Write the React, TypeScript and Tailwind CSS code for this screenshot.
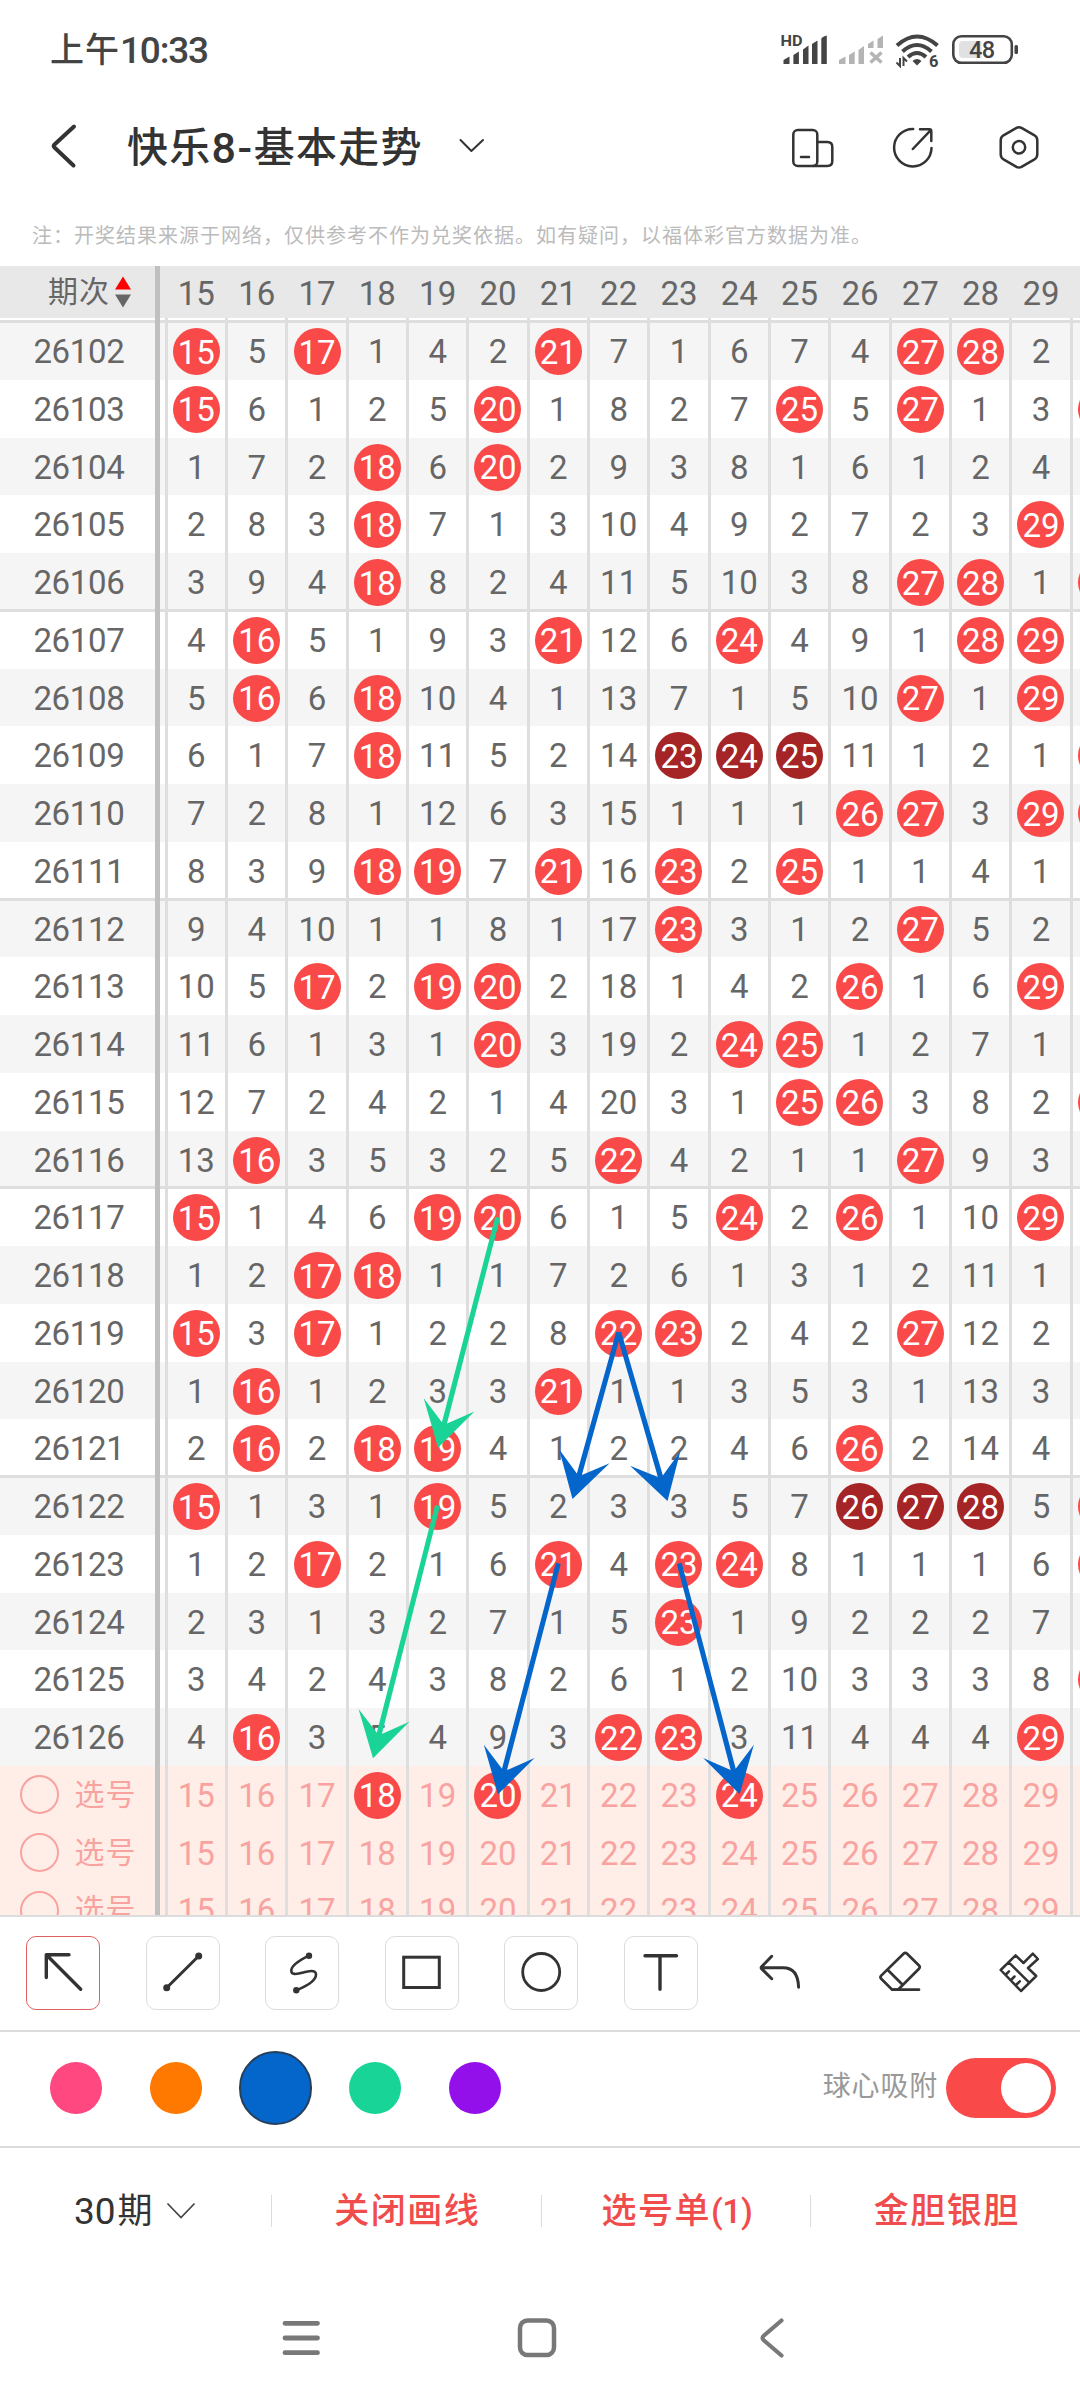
import type { ReactNode } from 'react';

const COLUMNS = [15, 16, 17, 18, 19, 20, 21, 22, 23, 24, 25, 26, 27, 28, 29, 30];

// "*" is a drawn number, "#" a drawn number inside a consecutive run, digits are misses.
const DRAWS = [
  '* 5 * 1 4 2 * 7 1 6 7 4 * * 2 -',
  '* 6 1 2 5 * 1 8 2 7 * 5 * 1 3 *',
  '1 7 2 * 6 * 2 9 3 8 1 6 1 2 4 -',
  '2 8 3 * 7 1 3 10 4 9 2 7 2 3 * -',
  '3 9 4 * 8 2 4 11 5 10 3 8 * * 1 *',
  '4 * 5 1 9 3 * 12 6 * 4 9 1 * * -',
  '5 * 6 * 10 4 1 13 7 1 5 10 * 1 * -',
  '6 1 7 * 11 5 2 14 # # # 11 1 2 1 *',
  '7 2 8 1 12 6 3 15 1 1 1 * * 3 * *',
  '8 3 9 * * 7 * 16 * 2 * 1 1 4 1 -',
  '9 4 10 1 1 8 1 17 * 3 1 2 * 5 2 -',
  '10 5 * 2 * * 2 18 1 4 2 * 1 6 * -',
  '11 6 1 3 1 * 3 19 2 * * 1 2 7 1 -',
  '12 7 2 4 2 1 4 20 3 1 * * 3 8 2 *',
  '13 * 3 5 3 2 5 * 4 2 1 1 * 9 3 -',
  '* 1 4 6 * * 6 1 5 * 2 * 1 10 * -',
  '1 2 * * 1 1 7 2 6 1 3 1 2 11 1 -',
  '* 3 * 1 2 2 8 * * 2 4 2 * 12 2 -',
  '1 * 1 2 3 3 * 1 1 3 5 3 1 13 3 -',
  '2 * 2 * * 4 1 2 2 4 6 * 2 14 4 -',
  '* 1 3 1 * 5 2 3 3 5 7 # # # 5 *',
  '1 2 * 2 1 6 * 4 * * 8 1 1 1 6 *',
  '2 3 1 3 2 7 1 5 * 1 9 2 2 2 7 -',
  '3 4 2 4 3 8 2 6 1 2 10 3 3 3 8 *',
  '4 * 3 5 4 9 3 * * 3 11 4 4 4 * -',
].map((line) => line.split(' '));

const PICKS = [[18, 20, 24], [], []];

// Arrow geometry is relative to the top-left corner of the chart.
const ARROWS = [
  { from: [497.7, 951.3], to: [438, 1181.7], color: '#1ad397' },
  { from: [618.7, 1066.3], to: [572.5, 1233], color: '#0466cb' },
  { from: [618.7, 1066.3], to: [667.5, 1235], color: '#0466cb' },
  { from: [437.5, 1239.5], to: [373, 1492.3], color: '#1ad397' },
  { from: [558.3, 1297.3], to: [498, 1528.3], color: '#0466cb' },
  { from: [679.3, 1297.3], to: [739.7, 1528.3], color: '#0466cb' },
];

function Arrow({ from, to, color }: { from: number[]; to: number[]; color: string }) {
  const dx = to[0] - from[0];
  const dy = to[1] - from[1];
  const len = Math.hypot(dx, dy);
  const angle = (Math.atan2(dy, dx) * 180) / Math.PI;
  return (
    <polygon
      fill={color}
      transform={`translate(${to[0]} ${to[1]}) rotate(${angle})`}
      points={`0,0 -44.3,26.2 -25.7,2.6 ${-len},2.5 ${-len},-2.5 -25.7,-2.6 -44.3,-26.2`}
    />
  );
}

function Ball({ n, dark }: { n: number; dark?: boolean }) {
  return (
    <span
      className={`flex h-[47px] w-[47px] shrink-0 items-center justify-center rounded-full pt-px text-white ${
        dark ? 'bg-[#a52425]' : 'bg-[#f94a49]'
      }`}
    >
      {n === 30 ? null : n}
    </span>
  );
}

function Row({ label, bg, line, children }: { label: ReactNode; bg: string; line?: boolean; children: ReactNode }) {
  return (
    <div className={`relative flex h-[57.75px] shrink-0 ${bg}`}>
      <div className="flex w-[155px] shrink-0 items-center">{label}</div>
      <div className="w-[9.7px] shrink-0" />
      {children}
      {line && <div className="absolute inset-x-0 -top-[2px] h-[3px] bg-[#dedede]" />}
    </div>
  );
}

function Cell({ children }: { children?: ReactNode }) {
  return (
    <div className="flex w-[60.33px] shrink-0 items-center justify-center border-l-[3px] border-[#dedede] pt-px">
      {children}
    </div>
  );
}

function StatusBar() {
  return (
    <div className="flex h-[100px] items-center justify-between pr-[60px] pl-[50px] text-[#444]">
      <div className="flex items-center font-medium">
        <span className="text-[34px] tracking-[1px]">上午</span>
        <span className="text-[37px] tracking-[-1.2px]">10:33</span>
      </div>
      <svg width="240" height="40" viewBox="780 30 240 40">
        <text x="780.5" y="46" fontSize="15.5" fontWeight="700" fill="#444" textLength="22" lengthAdjust="spacingAndGlyphs">
          HD
        </text>
        <g fill="#444">
          <path d="M783.5 64v-4l6-3.500v7.500z" />
          <path d="M793.400 64v-9l5.500-3.500v12.500z" />
          <path d="M803 64v-14.500l5.500-4v18.500z" />
          <path d="M812 64v-20l5.500-3.500v23.500z" />
          <path d="M821.300 64v-25q0-2 5.500-3.500v28.500z" />
        </g>
        <g fill="#b4b4b4">
          <path d="M839 64v-4l6.500-3.500v7.500z" />
          <path d="M849 64v-9l5.700-3.500v12.500z" />
          <path d="M858.500 64v-14l5.500-4v18z" />
          <path d="M868 48v-4l5.500-3.500v7.500z" />
          <path d="M877.500 48v-9l5.500-3.500v12.500z" />
        </g>
        <path d="M870.500 52.500l11 10M881.500 52.500l-11 10" stroke="#b4b4b4" strokeWidth="3.500" />
        <g fill="none" stroke="#444" strokeWidth="4">
          <path d="M897 45.500q20-18 40.500 0" />
          <path d="M902.500 51.500q14.500-13 29 0" />
          <path d="M908 57q9-8 18 0" />
        </g>
        <path d="M912.500 61q4.500-4 9 0l-4.500 4.500z" fill="#444" />
        <path d="M900 58v8l-3.500-3.500M903.500 66v-8l3.500 3.500" stroke="#444" strokeWidth="2" fill="none" />
        <text x="929" y="66.500" fontSize="16.500" fontWeight="700" fill="#444">
          6
        </text>
        <rect x="953.300" y="36.300" width="58.500" height="26.500" rx="8" fill="none" stroke="#444" strokeWidth="2.600" />
        <path d="M963 41h18.500v17h-18.500q-4 0-4-4v-9q0-4 4-4z" fill="#e1e1e1" />
        <rect x="1014.500" y="45" width="3.500" height="9" rx="1.500" fill="#444" />
        <text x="969" y="58" fontSize="23.500" fontWeight="500" fill="#444" textLength="26">
          48
        </text>
      </svg>
    </div>
  );
}

function TitleBar() {
  const icon = { fill: 'none', stroke: '#333', strokeLinecap: 'round' as const, strokeLinejoin: 'round' as const };
  return (
    <div className="relative flex h-[94px] items-center pl-[50px] text-[#333]">
      <svg width="28" height="48" viewBox="50 123 28 48" {...icon} strokeWidth="4">
        <path d="M74 126.500L54.500 144.500q-1.500 1.500 0 3L73.500 165.500" />
      </svg>
      <h1 className="ml-[49px] flex items-center pt-[2px] font-medium whitespace-nowrap">
        <span className="text-[41px] tracking-[1.3px]">快乐</span>
        <span className="text-[43px] tracking-[1.500px]">8-</span>
        <span className="text-[41px] tracking-[1.3px]">基本走势</span>
      </h1>
      <svg width="28" height="18" viewBox="456 138 28 18" className="ml-[35px]" {...icon} strokeWidth="2">
        <path d="M458.500 140L469.400 151L481 140" />
      </svg>
      <svg width="260" height="48" viewBox="786 123 260 48" className="absolute left-[786px]" {...icon} strokeWidth="2.500">
        <rect x="793.300" y="130" width="24" height="36" rx="4.500" />
        <path d="M817.300 142h10q5 0 5 5v14q0 5-5 5h-14M801 157h8" />
        <path d="M913.200 129a18.700 18.700 0 1 0 18.300 19M912.800 149L931 129.800M920 129.300h9.500q1.800 0 1.800 1.800v9.800" />
        <path d="M1016.500 127.800q2.500-1.300 5 0l13 7.500q2.800 1.700 2.800 5v14q0 3.300-2.800 5l-13 7.500q-2.500 1.300-5 0l-13-7.500q-2.800-1.700-2.800-5v-14q0-3.300 2.800-5z" />
        <circle cx="1019" cy="147.300" r="6.200" />
      </svg>
    </div>
  );
}

function Chart() {
  return (
    <div className="relative flex h-[1649px] flex-col overflow-hidden text-[33px] leading-none text-[#666]">
      <div className="flex h-[52px] shrink-0 items-center bg-[#e8e8e8]">
        <div className="flex w-[155px] shrink-0 items-center pl-[48px]">
          <span className="text-[30px] tracking-[1px]">期次</span>
          <svg width="16" height="32" viewBox="0 0 16 32" className="ml-[5px]">
            <path d="M8 .500L16 13.500H0z" fill="#f00" />
            <path d="M8 31.500L16 18.500H0z" fill="#666" />
          </svg>
        </div>
        <div className="w-[9.7px] shrink-0" />
        {COLUMNS.slice(0, 15).map((c) => (
          <div key={c} className="flex w-[60.33px] shrink-0 justify-center pt-[2px] pl-[3px]">
            {c}
          </div>
        ))}
      </div>
      <div className="flex h-[4.2px] shrink-0 pl-[164.7px]">
        {COLUMNS.map((c) => (
          <Cell key={c} />
        ))}
      </div>
      {DRAWS.map((draw, r) => (
        <Row
          key={r}
          line={r % 5 === 0}
          bg={r % 2 === 0 ? 'bg-[#f5f5f5]' : 'bg-white'}
          label={<span className="w-full pt-px pl-[3px] text-center tracking-[-0.3px]">{26102 + r}</span>}
        >
          {draw.map((v, i) => (
            <Cell key={i}>
              {v === '*' || v === '#' ? <Ball n={COLUMNS[i]} dark={v === '#'} /> : v === '-' ? null : v}
            </Cell>
          ))}
        </Row>
      ))}
      {PICKS.map((picked: number[], r) => (
        <Row
          key={r}
          bg="bg-[#feeee7] text-[#f9a3a1]"
          label={
            <div className="flex items-center pl-[19.500px]">
              <span className="h-[39px] w-[39px] rounded-full border-2 border-[#f9a3a1]" />
              <span className="ml-[16px] text-[30px] tracking-[1px]">选号</span>
            </div>
          }
        >
          {COLUMNS.map((c) => (
            <Cell key={c}>{picked.includes(c) ? <Ball n={c} /> : c === 30 ? null : c}</Cell>
          ))}
        </Row>
      ))}
      <div className="absolute inset-y-0 left-[155px] w-[5px] bg-[#c0c0c0]" />
      <svg width="1080" height="1649" viewBox="0 0 1080 1649" className="absolute inset-0">
        {ARROWS.map((a, i) => (
          <Arrow key={i} {...a} />
        ))}
      </svg>
    </div>
  );
}

const TOOLS = [
  <path d="M54.700 53.300L20.300 18.700M43 18.700H20.300V41.500" strokeWidth="3.400" />,
  <>
    <path d="M20.700 51.700L52.700 20" strokeWidth="3" />
    <circle cx="20.700" cy="51.700" r="3.500" fill="#333" stroke="none" />
    <circle cx="52.700" cy="20" r="3.500" fill="#333" stroke="none" />
  </>,
  <>
    <path d="M44 19.700C34 24.500 26 30.500 26.300 35C26.500 39 31.500 38 35 37.200C41 35.800 51 32.500 51 38.500C51 44 42 50 31.300 54.300" strokeWidth="2.600" />
    <circle cx="44" cy="19.700" r="3.200" fill="#333" stroke="none" />
    <circle cx="31.300" cy="54.300" r="3.200" fill="#333" stroke="none" />
  </>,
  <rect x="18.700" y="21.200" width="35.600" height="30.300" strokeWidth="3" strokeLinejoin="miter" />,
  <circle cx="37.200" cy="36" r="18.500" strokeWidth="2.800" />,
  <path d="M21 19.700H52.500M36 19.700V53.300" strokeWidth="3.400" />,
  <path d="M28.700 20.300L18.800 30.500q-1.200 1.200 0 2.400L28.700 42.700M19 31.700H40C51 31.700 55.300 39 55.600 51.300" strokeWidth="3" />,
  <>
    <path d="M40.500 17.700q1.800-1.700 3.600 0L56 29.500q1.500 1.500 0 3.200L35 53.700H29.200L18.200 42.800q-1.500-1.500 0-3.200z" strokeWidth="2.700" />
    <path d="M24.800 34L38.900 48M31 53.700H56" strokeWidth="2.700" />
  </>,
  <path d="M18.700 34L33.600 19.300L41.500 27L50.800 17.700L55.900 23L46 32L54.200 40L39 55zM27 26.700L47 46.300M23.800 38.500L27 35.300M29.500 43.500L32.500 40.500M34.500 48.500L37.800 45.300" strokeWidth="2.500" />,
];

const BOX_STYLES = [
  'border border-[#e06060] rounded-[10px]',
  'border border-[#dcdcdc] rounded-[10px]',
  'border border-transparent',
];

function Toolbar() {
  return (
    <div className="flex h-[115px] items-start justify-between border-t-2 border-[#dcdcdc] pt-[19px] pr-[24px] pl-[26px]">
      {TOOLS.map((tool, i) => (
        <div key={i} className={`h-[74px] w-[74px] ${BOX_STYLES[i === 0 ? 0 : i < 6 ? 1 : 2]}`}>
          <svg
            width="72"
            height="72"
            viewBox="1 1 72 72"
            fill="none"
            stroke="#333"
            strokeLinecap="round"
            strokeLinejoin="round"
          >
            {tool}
          </svg>
        </div>
      ))}
    </div>
  );
}

function Palette() {
  return (
    <div className="flex h-[116px] items-center border-t-2 border-[#dcdcdc] pr-[24px] pb-[2px] pl-[50px]">
      <span className="h-[52px] w-[52px] rounded-full bg-[#ff4780]" />
      <span className="ml-[48px] h-[52px] w-[52px] rounded-full bg-[#ff7900]" />
      <span className="ml-[37px] h-[74px] w-[73px] rounded-full border-2 border-[#26405c] bg-[#0466cb]" />
      <span className="ml-[37px] h-[52px] w-[52px] rounded-full bg-[#18d496]" />
      <span className="ml-[48px] h-[52px] w-[52px] rounded-full bg-[#9410eb]" />
      <span className="ml-auto pb-[2px] text-[28px] tracking-[0.8px] text-[#999]">球心吸附</span>
      <span className="ml-[8px] flex h-[60px] w-[110px] items-center justify-end rounded-full bg-[#f94a49] pr-[5px]">
        <span className="h-[50px] w-[50px] rounded-full bg-white" />
      </span>
    </div>
  );
}

function BottomTabs() {
  return (
    <div className="flex h-[128px] items-center border-t-2 border-[#dcdcdc] text-[35px] font-medium text-[#f04c4b]">
      <div className="flex w-[271px] shrink-0 items-center pl-[74px] font-normal text-[#333]">
        <span className="text-[37px]">30</span>
        <span className="ml-[2px]">期</span>
        <svg width="30" height="18" viewBox="0 0 30 18" className="ml-[13px]" fill="none" stroke="#444" strokeWidth="1.700">
          <path d="M1.500 1.500L15 15.500L28.500 1.500" />
        </svg>
      </div>
      {[
        ['关闭画线', ''],
        ['选号单', '(1)'],
        ['金胆银胆', ''],
      ].map(([name, count]) => (
        <div
          key={name}
          className="flex h-[32px] flex-1 items-center justify-center border-l border-[#dcdcdc] pl-[2px] tracking-[1.500px] whitespace-nowrap"
        >
          {name}
          {count && <span className="pb-px text-[34px] tracking-[-0.5px]">{count}</span>}
        </div>
      ))}
    </div>
  );
}

function SystemNav() {
  return (
    <div className="flex flex-1 items-start justify-center">
      <svg width="560" height="60" viewBox="260 2308 560 60" className="mt-[34px]" fill="none" stroke="#787878" strokeLinecap="round" strokeLinejoin="round">
        <path d="M285 2323.300H317.500M285 2338H317.500M285 2352.700H317.500" strokeWidth="4.800" />
        <rect x="520" y="2320.500" width="34" height="34.500" rx="7.500" strokeWidth="4.500" />
        <path d="M781.500 2320.500L764 2335.500q-3 2.500 0 5L781.500 2355.500" strokeWidth="4.200" />
      </svg>
    </div>
  );
}

export default function App() {
  return (
    <div className="relative flex h-[2400px] w-[1080px] flex-col overflow-hidden bg-white font-['Roboto','Noto_Sans_CJK_SC',sans-serif] leading-none">
      <StatusBar />
      <TitleBar />
      <p className="flex h-[72px] items-center pt-[12px] pl-[32px] text-[20px] tracking-[1px] whitespace-nowrap text-[#bbb]">
        注：开奖结果来源于网络，仅供参考不作为兑奖依据。如有疑问，以福体彩官方数据为准。
      </p>
      <Chart />
      <Toolbar />
      <Palette />
      <BottomTabs />
      <SystemNav />
    </div>
  );
}
